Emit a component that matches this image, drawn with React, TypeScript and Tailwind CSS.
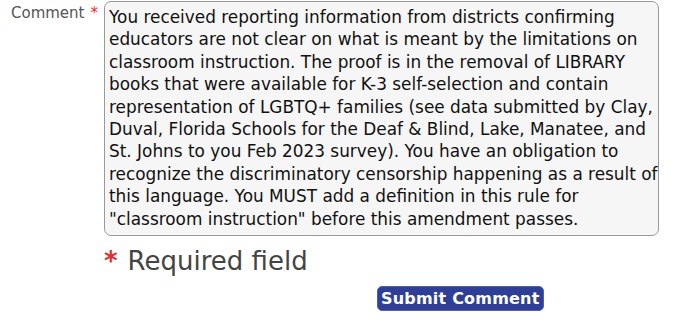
import React from 'react';

const lines = [
    'You received reporting information from districts confirming',
    'educators are not clear on what is meant by the limitations on',
    'classroom instruction. The proof is in the removal of LIBRARY',
    'books that were available for K-3 self-selection and contain',
    'representation of LGBTQ+ families (see data submitted by Clay,',
    'Duval, Florida Schools for the Deaf & Blind, Lake, Manatee, and',
    'St. Johns to you Feb 2023 survey). You have an obligation to',
    'recognize the discriminatory censorship happening as a result of',
    'this language. You MUST add a definition in this rule for',
    '"classroom instruction" before this amendment passes.',
];

const App: React.FC = () => {
    return (
        <div className="w-[680px] h-[328px] bg-white overflow-hidden" style={{ fontFamily: '"DejaVu Sans", Verdana, sans-serif' }}>
            <div className="flex items-start pl-[11px] pt-[1px]">
                <div className="w-[93px] flex text-[15px] text-[#555] leading-[24px]">
                    <span>Comment</span>
                    <span className="text-[#e03030] ml-[6px]">*</span>
                </div>
                <div className="w-[555px] h-[235px] border border-[#999] rounded-[7px] bg-[#f6f6f6] pl-[4px] pt-[4px] text-[16.9px] leading-[22.4px] text-[#111]">
                    {lines.map((line) => (
                        <div key={line} className="whitespace-nowrap">{line}</div>
                    ))}
                </div>
            </div>

            <div className="pl-[104px] mt-[10px] flex items-center text-[26px] leading-[30px] text-[#444]">
                <span className="text-[#e03030] font-bold mr-[10px]">*</span>
                <span>Required field</span>
            </div>

            <div className="pl-[377px] mt-[10px]">
                <button className="bg-[#2e3f95] text-white font-bold text-[16px] tracking-[0.2px] leading-[23px] px-[3px] rounded-[5px] border border-[#5060b0]">
                    Submit Comment
                </button>
            </div>
        </div>
    );
};

export default App;
